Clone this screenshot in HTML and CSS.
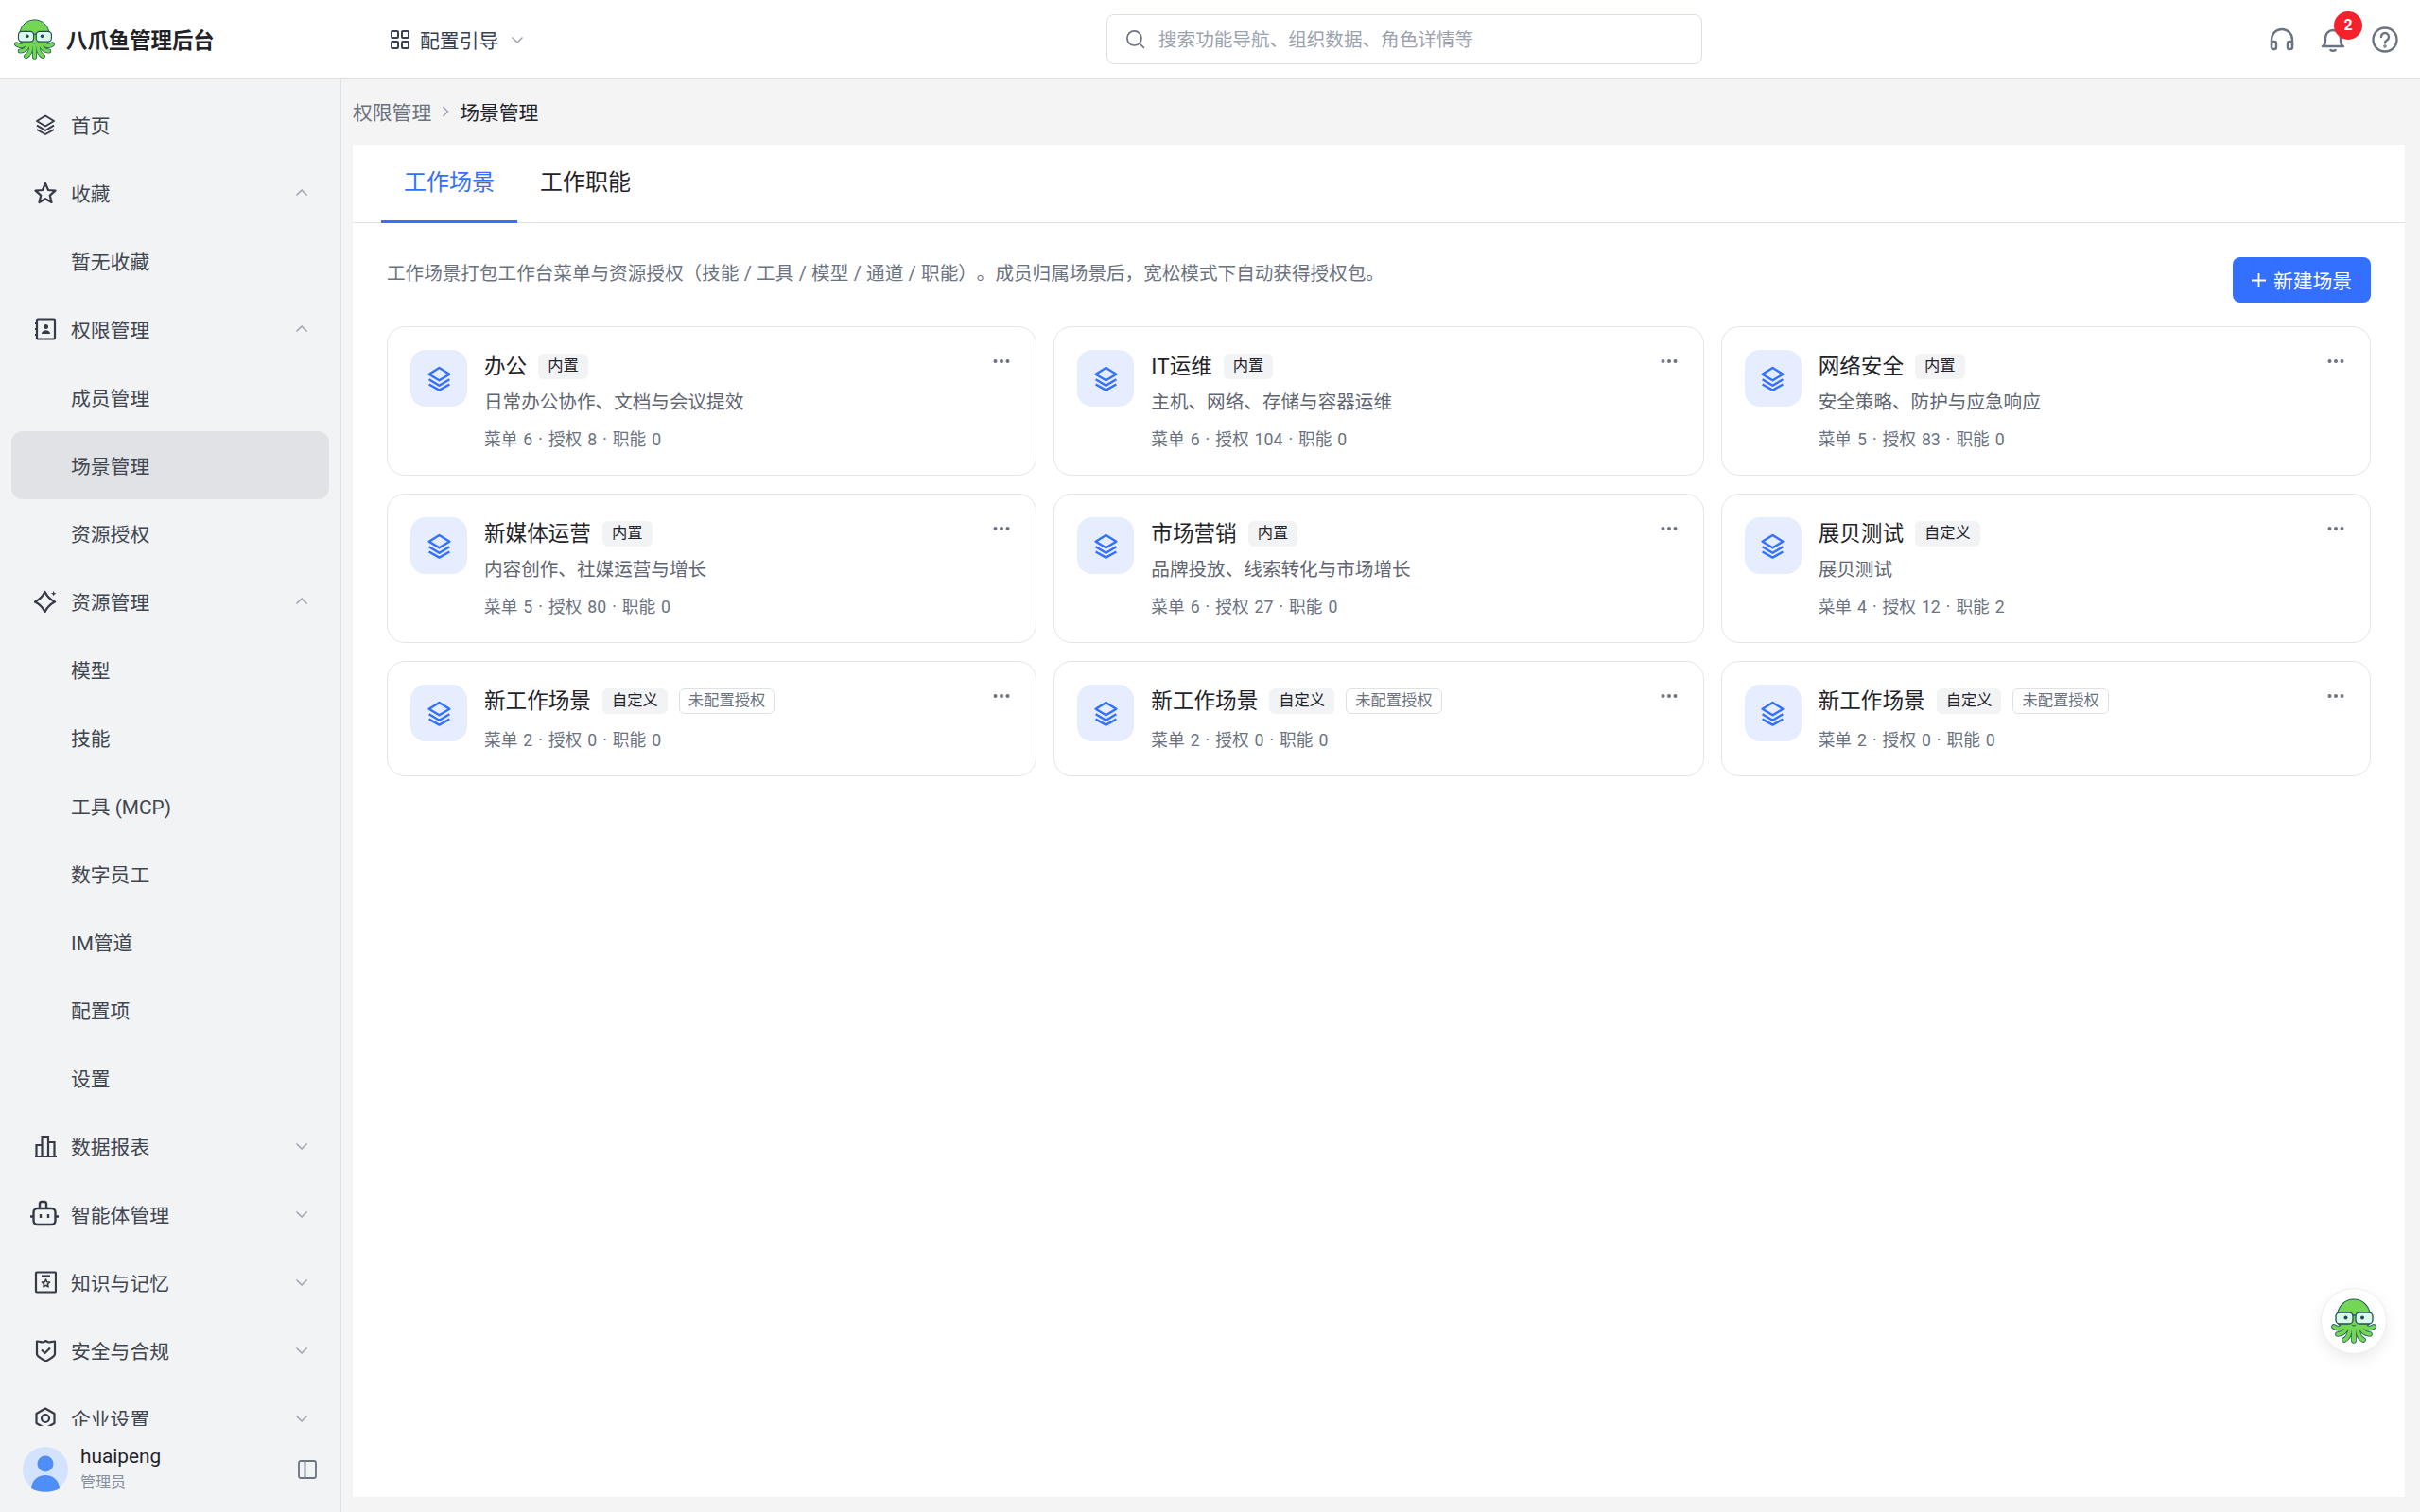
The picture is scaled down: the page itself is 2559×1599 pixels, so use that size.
FILE: index.html
```html
<!DOCTYPE html>
<html lang="zh-CN">
<head>
  <meta charset="UTF-8" />
  <title>八爪鱼管理后台 - 场景管理</title>
  <link rel="stylesheet" href="styles.css">
</head>
<body>

  <svg class="defs" width="0" height="0">
    <symbol id="octopus" viewBox="0 0 48 48">
      <g fill="none" stroke="#1d5c57" stroke-width="5.600" stroke-linecap="round">
        <path d="M15 27C13 32 7 33 3 30" />
        <path d="M17 29C16 35 11 38 7 38" />
        <path d="M20 31C20 37 18 42 14 44" />
        <path d="M24 31C24 37 24 41 24 45" />
        <path d="M28 31C28 37 30 42 34 44" />
        <path d="M31 29C32 35 37 38 41 38" />
        <path d="M33 27C35 32 41 33 45 30" />
      </g>
      <path d="M6 22C6 9 14 1 24 1s18 8 18 21c0 7-8 11-18 11S6 29 6 22z" fill="#74d653" stroke="#1d5c57" stroke-width="1.100" />
      <g fill="none" stroke="#74d653" stroke-width="4" stroke-linecap="round">
        <path d="M15 27C13 32 7 33 3 30" />
        <path d="M17 29C16 35 11 38 7 38" />
        <path d="M20 31C20 37 18 42 14 44" />
        <path d="M24 31C24 37 24 41 24 45" />
        <path d="M28 31C28 37 30 42 34 44" />
        <path d="M31 29C32 35 37 38 41 38" />
        <path d="M33 27C35 32 41 33 45 30" />
      </g>
      <path d="M11 27h26v4H11z" fill="#74d653" />
      <g fill="#dcf8ea" stroke="#1d4d55" stroke-width="1.300">
        <rect x="5" y="15" width="18" height="12" rx="4" />
        <rect x="26" y="15" width="18" height="12" rx="4" />
      </g>
      <path d="M23 18h3" stroke="#1d4d55" stroke-width="1.300" />
      <circle cx="15.500" cy="20.500" r="2" fill="#1d4d55" />
      <circle cx="33" cy="20.500" r="2" fill="#1d4d55" />
      <path d="M22 28c1 1.600 3 1.600 4 0" fill="none" stroke="#1d4d55" stroke-width="1" stroke-linecap="round" />
    </symbol>
    <symbol id="layers" viewBox="0 0 24 24">
      <path d="M12 2.500l9 5.500-9 5.500L3 8z" fill="none" stroke="currentColor" stroke-width="2" stroke-linejoin="round" />
      <path d="M3 12.600l9 5.400 9-5.400M3 17l9 5 9-5" fill="none" stroke="currentColor" stroke-width="2" stroke-linejoin="round" />
    </symbol>
    <symbol id="chev" viewBox="0 0 14 14">
      <path d="M1.500 4.500L7 10l5.500-5.500" fill="none" stroke="currentColor" stroke-width="1.500" />
    </symbol>
    <symbol id="dots" viewBox="0 0 18 6">
      <circle cx="2.500" cy="3" r="2" fill="currentColor" />
      <circle cx="9" cy="3" r="2" fill="currentColor" />
      <circle cx="15.500" cy="3" r="2" fill="currentColor" />
    </symbol>
  </svg>

  <div class="top-bar">
    <div class="brand">
      <svg class="brand-logo"><use href="#octopus" /></svg>
      <h1>八爪鱼管理后台</h1>
    </div>
    <div class="guide">
      <svg class="guide-icon" viewBox="0 0 20 20" fill="none" stroke="currentColor" stroke-width="2">
        <rect x="1" y="1" width="7" height="7" rx="1" />
        <rect x="12" y="1" width="7" height="7" rx="1" />
        <rect x="1" y="12" width="7" height="7" rx="1" />
        <rect x="12" y="12" width="7" height="7" rx="1" />
      </svg>
      <span>配置引导</span>
      <svg class="chev guide-chev"><use href="#chev" /></svg>
    </div>
    <div class="search-box">
      <svg class="search-icon" viewBox="0 0 20 20" fill="none" stroke="currentColor" stroke-width="1.600" stroke-linecap="round">
        <circle cx="9" cy="9" r="7.200" />
        <path d="M14.500 14.500L18.500 18.500" />
      </svg>
      <span>搜索功能导航、组织数据、角色详情等</span>
    </div>
    <div class="top-actions">
      <svg class="top-icon" viewBox="0 0 26 26" fill="none" stroke="currentColor" stroke-width="2.400" stroke-linecap="round">
        <path d="M2 19v-6a11 11 0 0 1 22 0v6" />
        <rect x="2" y="15" width="5" height="8" rx="2" />
        <rect x="19" y="15" width="5" height="8" rx="2" />
      </svg>
      <div class="bell">
        <svg class="top-icon" viewBox="0 0 26 26" fill="none" stroke="currentColor" stroke-width="2.400" stroke-linecap="round" stroke-linejoin="round">
          <path d="M2 20c2-1 3-3 3-6v-3a8 8 0 0 1 16 0v3c0 3 1 5 3 6z" />
          <path d="M10.500 24c1.500 1 3.500 1 5 0" />
        </svg>
        <span class="badge">2</span>
      </div>
      <svg class="top-icon help" viewBox="0 0 28 28" fill="none" stroke="currentColor" stroke-width="2.400" stroke-linecap="round">
        <circle cx="14" cy="14" r="12.500" />
        <path d="M10 11a4 4 0 1 1 6 3.500c-1.300.8-2 1.400-2 2.800" />
        <circle cx="14" cy="21" r=".6" />
      </svg>
    </div>
  </div>

  <div class="layout">
    <aside class="sidebar">
      <nav class="menu">
        <a class="menu-item">
          <svg class="menu-icon"><use href="#layers" /></svg>
          <span>首页</span>
        </a>
        <a class="menu-item">
          <svg class="menu-icon" viewBox="0 0 24 24" fill="none" stroke="currentColor" stroke-width="2.200" stroke-linejoin="round">
            <path d="M12 2l3 7 7.500.7-5.700 5 1.700 7.300L12 18.200 5.500 22l1.700-7.300-5.700-5L9 9z" />
          </svg>
          <span>收藏</span>
          <svg class="chev up"><use href="#chev" /></svg>
        </a>
        <a class="menu-item"><span>暂无收藏</span></a>
        <a class="menu-item">
          <svg class="menu-icon" viewBox="0 0 24 24" fill="none" stroke="currentColor" stroke-width="2.200">
            <rect x="3" y="1.500" width="19" height="21" rx="1" />
            <path d="M1 6h3M1 12h3M1 18h3" />
            <circle cx="12.500" cy="9.500" r="2.500" fill="currentColor" stroke="none" />
            <path d="M8 17c0-5 9-5 9 0z" fill="currentColor" stroke="none" />
          </svg>
          <span>权限管理</span>
          <svg class="chev up"><use href="#chev" /></svg>
        </a>
        <a class="menu-item"><span>成员管理</span></a>
        <a class="menu-item active"><span>场景管理</span></a>
        <a class="menu-item"><span>资源授权</span></a>
        <a class="menu-item">
          <svg class="menu-icon" viewBox="0 0 24 24" fill="none" stroke="currentColor" stroke-width="2.400" stroke-linejoin="round">
            <path d="M11.500 2Q15 9 22 12.500 15 16 11.500 23 8 16 1 12.500 8 9 11.500 2z" />
            <path d="M20.700 .8l.8 2.100 2.200.8-2.200.8-.8 2.100-.8-2.100-2.200-.8 2.200-.8z" fill="currentColor" stroke="none" />
          </svg>
          <span>资源管理</span>
          <svg class="chev up"><use href="#chev" /></svg>
        </a>
        <a class="menu-item"><span>模型</span></a>
        <a class="menu-item"><span>技能</span></a>
        <a class="menu-item"><span>工具 (MCP)</span></a>
        <a class="menu-item"><span>数字员工</span></a>
        <a class="menu-item"><span>IM管道</span></a>
        <a class="menu-item"><span>配置项</span></a>
        <a class="menu-item"><span>设置</span></a>
        <a class="menu-item">
          <svg class="menu-icon" viewBox="0 0 24 24" fill="none" stroke="currentColor" stroke-width="2.200">
            <path d="M1 23h23M2.500 23V11h6v12M8.500 23V2h6.500v21M15 23V8h6.500v15" />
          </svg>
          <span>数据报表</span>
          <svg class="chev"><use href="#chev" /></svg>
        </a>
        <a class="menu-item">
          <svg class="menu-icon wide" viewBox="0 0 32 28" fill="none" stroke="currentColor" stroke-width="2.400" stroke-linejoin="round">
            <rect x="4.500" y="9" width="23" height="17" rx="4" />
            <path d="M11 9V3.500A2 2 0 0 1 13 2h3a2 2 0 0 1 2 2v5M1 17.500h3M28 17.500h3M12 15v4M20 15v4" />
          </svg>
          <span>智能体管理</span>
          <svg class="chev"><use href="#chev" /></svg>
        </a>
        <a class="menu-item">
          <svg class="menu-icon" viewBox="0 0 24 24" fill="none" stroke="currentColor" stroke-width="2.200" stroke-linejoin="round">
            <rect x="2" y="1.500" width="21" height="21" rx="1" />
            <path d="M8 5.500h9" />
            <path d="M12.500 9l1.200 2.700 2.900.3-2.200 2 .6 2.900-2.500-1.500-2.500 1.500.6-2.900-2.200-2 2.900-.3z" stroke-width="1.600" />
          </svg>
          <span>知识与记忆</span>
          <svg class="chev"><use href="#chev" /></svg>
        </a>
        <a class="menu-item">
          <svg class="menu-icon" viewBox="0 0 24 24" fill="none" stroke="currentColor" stroke-width="2.200" stroke-linejoin="round">
            <path d="M3 2.500c3.500 0 4.500 1 6 1 1 0 2-.5 3.500-1.500 1.500 1 2.500 1.500 3.500 1.500 1.500 0 3-1 6-1v13.500c0 2-6 6-9.500 7.500C9 22 3 18 3 16z" />
            <path d="M8 11.500l3.500 3.500 5.500-5.500" />
          </svg>
          <span>安全与合规</span>
          <svg class="chev"><use href="#chev" /></svg>
        </a>
        <a class="menu-item">
          <svg class="menu-icon" viewBox="0 0 24 24" fill="none" stroke="currentColor" stroke-width="2.200" stroke-linejoin="round">
            <path d="M12 1.500l9.500 5.500v10L12 22.500 2.500 17V7z" />
            <circle cx="12" cy="12" r="4" />
          </svg>
          <span>企业设置</span>
          <svg class="chev"><use href="#chev" /></svg>
        </a>
      </nav>
      <div class="user-bar">
        <svg class="avatar" viewBox="0 0 48 48">
          <circle cx="24" cy="24" r="24" fill="#d3e3fd" />
          <circle cx="24" cy="18" r="8.500" fill="#4f8df7" />
          <path d="M9 44c1-9 7-14 15-14s14 5 15 14c-8 5-22 5-30 0z" fill="#4f8df7" />
        </svg>
        <div class="user-info">
          <div class="user-name">huaipeng</div>
          <div class="user-role">管理员</div>
        </div>
        <svg class="collapse" viewBox="0 0 20 20" fill="none" stroke="currentColor" stroke-width="1.800">
          <rect x="1" y="1" width="18" height="18" rx="2" />
          <path d="M7.500 1v18" />
        </svg>
      </div>
    </aside>

    <main class="page">
      <div class="crumbs">
        <span class="crumb-parent">权限管理</span>
        <svg class="crumb-sep" viewBox="0 0 8 12" fill="none" stroke="currentColor" stroke-width="1.500"><path d="M1.500 1l5 5-5 5" /></svg>
        <span>场景管理</span>
      </div>

      <div class="panel">
        <div class="tabs">
          <div class="tab active">工作场景</div>
          <div class="tab">工作职能</div>
        </div>

        <div class="panel-body">
          <div class="intro">
            <p>工作场景打包工作台菜单与资源授权（技能 / 工具 / 模型 / 通道 / 职能）。成员归属场景后，宽松模式下自动获得授权包。</p>
            <button class="add-btn">
              <svg class="plus" viewBox="0 0 15 15" fill="none" stroke="currentColor" stroke-width="1.800"><path d="M7.500 0v15M0 7.500h15" /></svg>
              <span>新建场景</span>
            </button>
          </div>

          <div class="cards">
            <div class="card">
              <div class="card-icon"><svg><use href="#layers" /></svg></div>
              <div class="card-main">
                <div class="card-title"><h3>办公</h3><span class="tag">内置</span></div>
                <p class="card-desc">日常办公协作、文档与会议提效</p>
                <p class="card-meta">菜单 6 · 授权 8 · 职能 0</p>
              </div>
              <svg class="card-more"><use href="#dots" /></svg>
            </div>
            <div class="card">
              <div class="card-icon"><svg><use href="#layers" /></svg></div>
              <div class="card-main">
                <div class="card-title"><h3>IT运维</h3><span class="tag">内置</span></div>
                <p class="card-desc">主机、网络、存储与容器运维</p>
                <p class="card-meta">菜单 6 · 授权 104 · 职能 0</p>
              </div>
              <svg class="card-more"><use href="#dots" /></svg>
            </div>
            <div class="card">
              <div class="card-icon"><svg><use href="#layers" /></svg></div>
              <div class="card-main">
                <div class="card-title"><h3>网络安全</h3><span class="tag">内置</span></div>
                <p class="card-desc">安全策略、防护与应急响应</p>
                <p class="card-meta">菜单 5 · 授权 83 · 职能 0</p>
              </div>
              <svg class="card-more"><use href="#dots" /></svg>
            </div>
            <div class="card">
              <div class="card-icon"><svg><use href="#layers" /></svg></div>
              <div class="card-main">
                <div class="card-title"><h3>新媒体运营</h3><span class="tag">内置</span></div>
                <p class="card-desc">内容创作、社媒运营与增长</p>
                <p class="card-meta">菜单 5 · 授权 80 · 职能 0</p>
              </div>
              <svg class="card-more"><use href="#dots" /></svg>
            </div>
            <div class="card">
              <div class="card-icon"><svg><use href="#layers" /></svg></div>
              <div class="card-main">
                <div class="card-title"><h3>市场营销</h3><span class="tag">内置</span></div>
                <p class="card-desc">品牌投放、线索转化与市场增长</p>
                <p class="card-meta">菜单 6 · 授权 27 · 职能 0</p>
              </div>
              <svg class="card-more"><use href="#dots" /></svg>
            </div>
            <div class="card">
              <div class="card-icon"><svg><use href="#layers" /></svg></div>
              <div class="card-main">
                <div class="card-title"><h3>展贝测试</h3><span class="tag">自定义</span></div>
                <p class="card-desc">展贝测试</p>
                <p class="card-meta">菜单 4 · 授权 12 · 职能 2</p>
              </div>
              <svg class="card-more"><use href="#dots" /></svg>
            </div>
            <div class="card">
              <div class="card-icon"><svg><use href="#layers" /></svg></div>
              <div class="card-main">
                <div class="card-title"><h3>新工作场景</h3><span class="tag">自定义</span><span class="tag outline">未配置授权</span></div>
                <p class="card-meta">菜单 2 · 授权 0 · 职能 0</p>
              </div>
              <svg class="card-more"><use href="#dots" /></svg>
            </div>
            <div class="card">
              <div class="card-icon"><svg><use href="#layers" /></svg></div>
              <div class="card-main">
                <div class="card-title"><h3>新工作场景</h3><span class="tag">自定义</span><span class="tag outline">未配置授权</span></div>
                <p class="card-meta">菜单 2 · 授权 0 · 职能 0</p>
              </div>
              <svg class="card-more"><use href="#dots" /></svg>
            </div>
            <div class="card">
              <div class="card-icon"><svg><use href="#layers" /></svg></div>
              <div class="card-main">
                <div class="card-title"><h3>新工作场景</h3><span class="tag">自定义</span><span class="tag outline">未配置授权</span></div>
                <p class="card-meta">菜单 2 · 授权 0 · 职能 0</p>
              </div>
              <svg class="card-more"><use href="#dots" /></svg>
            </div>
          </div>
        </div>
      </div>
    </main>
  </div>

  <div class="float-btn"><svg><use href="#octopus" /></svg></div>

</body>
</html>
```

FILE: styles.css
```css
* {
  box-sizing: border-box;
}

body {
  margin: 0;
  height: 1599px;
  overflow: hidden;
  display: flex;
  flex-direction: column;
  font-family: Roboto, "Noto Sans CJK SC", sans-serif;
  font-size: 20.8px;
  text-spacing-trim: space-all;
  color: #1f2329;
  background: #f4f4f4;
}

.defs {
  position: absolute;
}

h1, h3, p {
  margin: 0;
  font-weight: 400;
}

/* top bar */
.top-bar {
  flex: none;
  display: flex;
  align-items: center;
  height: 84px;
  background: #fff;
  border-bottom: 1.6px solid #e0e0e0;
}

.brand {
  width: 413px;
  display: flex;
  align-items: center;
  padding-left: 15px;
}

.brand-logo {
  width: 43px;
  height: 43px;
}

.brand h1 {
  margin: -2px 0 0 12px;
  font-size: 22.4px;
  font-weight: 700;
  color: #1f2329;
}

.guide {
  width: 141px;
  display: flex;
  align-items: center;
  white-space: nowrap;
  color: #374151;
}

.guide-icon {
  flex: none;
  width: 20px;
  height: 20px;
  margin-right: 11px;
}

.guide-chev {
  flex: none;
  margin-left: 13px;
}

.chev {
  width: 14px;
  height: 14px;
  color: #9ca3af;
}

.chev.up {
  transform: rotate(180deg);
}

.search-box {
  width: 630px;
  height: 53px;
  margin-left: 616px;
  display: flex;
  align-items: center;
  padding-left: 19px;
  background: #fff;
  border: 1.6px solid #dcdfe6;
  border-radius: 8px;
  font-size: 19.6px;
  color: #9ca3af;
}

.search-box span {
  margin-top: -2px;
}

.search-icon {
  width: 21px;
  height: 21px;
  margin-right: 14px;
  color: #6b7280;
}

.top-actions {
  margin-left: auto;
  display: flex;
  align-items: center;
  gap: 28px;
  padding-right: 23px;
  color: #6b7280;
}

.top-icon {
  display: block;
  width: 26px;
  height: 26px;
}

.top-icon.help {
  width: 28px;
  height: 28px;
}

.bell {
  position: relative;
}

.badge {
  position: absolute;
  top: -17px;
  left: 14px;
  width: 30px;
  height: 30px;
  border-radius: 50%;
  background: #f5222d;
  color: #fff;
  font-size: 16px;
  font-weight: 700;
  line-height: 30px;
  text-align: center;
}

/* layout */
.layout {
  flex: 1;
  min-height: 0;
  display: flex;
}

.sidebar {
  width: 361px;
  flex: none;
  display: flex;
  flex-direction: column;
  background: #f2f3f5;
  border-right: 1.6px solid #dfe1e5;
}

.menu {
  height: 1424px;
  overflow: hidden;
  padding: 12px 12px 0;
}

.menu-item {
  position: relative;
  display: flex;
  align-items: center;
  height: 72px;
  padding-left: 63px;
  border-radius: 12px;
  color: #3f4650;
}

.menu-item.active {
  background: #e1e2e5;
}

.menu-icon {
  position: absolute;
  left: 24px;
  top: 24px;
  width: 24px;
  height: 24px;
  color: #343a46;
}

.menu-icon.wide {
  left: 19px;
  width: 32px;
  height: 28px;
  top: 21px;
}

.menu-item .chev {
  position: absolute;
  right: 22px;
  top: 29px;
}

.user-bar {
  flex: 1;
  display: flex;
  align-items: center;
  padding: 0 25px 0 24px;
}

.avatar {
  width: 48px;
  height: 48px;
}

.user-info {
  margin: -2px 0 0 13px;
}

.user-name {
  font-size: 20.8px;
  line-height: 28px;
  color: #1f2329;
}

.user-role {
  margin-top: 2px;
  font-size: 16px;
  line-height: 24px;
  color: #86909c;
}

.collapse {
  margin-left: auto;
  width: 20px;
  height: 20px;
  color: #6b7280;
}

/* page */
.page {
  flex: 1;
  min-width: 0;
  padding: 0 16px 16px 12px;
  display: flex;
  flex-direction: column;
}

.crumbs {
  height: 69px;
  display: flex;
  align-items: center;
  padding-bottom: 2px;
  color: #1f2329;
}

.crumb-parent {
  color: #6b7280;
}

.crumb-sep {
  width: 8px;
  height: 12px;
  margin: 0 11px 0 11px;
  color: #9ca3af;
}

.panel {
  flex: 1;
  background: #fff;
}

.tabs {
  display: flex;
  height: 83px;
  padding-left: 30px;
  border-bottom: 1.6px solid #e0e0e0;
}

.tab {
  height: 83px;
  padding: 0 24px;
  font-size: 24px;
  line-height: 80px;
  color: #1f2329;
}

.tab.active {
  color: #3370ff;
  border-bottom: 3.2px solid #3370ff;
}

.panel-body {
  padding: 36px 36px 0;
}

.intro {
  display: flex;
  justify-content: space-between;
  align-items: flex-start;
  height: 73px;
}

.intro p {
  padding-top: 2px;
  font-size: 19.6px;
  line-height: 32px;
  word-spacing: 0.5px;
  color: #6b7280;
}

.add-btn {
  display: flex;
  align-items: center;
  justify-content: center;
  width: 146px;
  height: 48px;
  padding: 0;
  border: none;
  border-radius: 8px;
  background: #3370ff;
  color: #fff;
  font-family: inherit;
  font-size: 20.8px;
}

.plus {
  width: 15px;
  height: 15px;
  margin-right: 8px;
}

.cards {
  display: grid;
  grid-template-columns: repeat(3, 1fr);
  gap: 19px 18px;
}

.card {
  position: relative;
  display: flex;
  padding: 24px;
  background: #fff;
  border: 1.6px solid #e3e5e8;
  border-radius: 19px;
}

.card-icon {
  flex: none;
  width: 60px;
  height: 60px;
  display: flex;
  align-items: center;
  justify-content: center;
  background: #e6edff;
  border-radius: 16px;
  color: #3370ff;
}

.card-icon svg {
  width: 29px;
  height: 29px;
}

.card-main {
  margin-left: 18px;
}

.card-title {
  display: flex;
  align-items: center;
  height: 34px;
}

.card-title h3 {
  margin-top: -3px;
  font-size: 22.6px;
  color: #1f2329;
}

.tag {
  margin-left: 12px;
  height: 27px;
  padding: 0 10px;
  background: #f2f3f5;
  border-radius: 6px;
  font-size: 16.3px;
  line-height: 26px;
  color: #1f2329;
}

.tag.outline {
  background: #fff;
  border: 1.6px solid #dfe1e5;
  line-height: 23px;
  padding: 0 9px;
  color: #6b7280;
}

.card-desc {
  margin-top: 7px;
  font-size: 19.6px;
  line-height: 29px;
  color: #5f6672;
}

.card-meta {
  margin-top: 12px;
  font-size: 17.7px;
  line-height: 26px;
  word-spacing: 1.6px;
  color: #6b7280;
}

.card-title + .card-meta {
  margin-top: 12px;
}

.card-more {
  position: absolute;
  top: 33px;
  right: 27px;
  width: 18px;
  height: 6px;
  color: #6b7280;
}

/* floating helper */
.float-btn {
  position: absolute;
  left: 2454px;
  top: 1362px;
  width: 70px;
  height: 70px;
  display: flex;
  align-items: center;
  justify-content: center;
  background: #fff;
  border: 1.6px solid #eee;
  border-radius: 50%;
  box-shadow: 0 6px 16px rgba(0, 0, 0, 0.08);
}

.float-btn svg {
  width: 48px;
  height: 48px;
}
```
